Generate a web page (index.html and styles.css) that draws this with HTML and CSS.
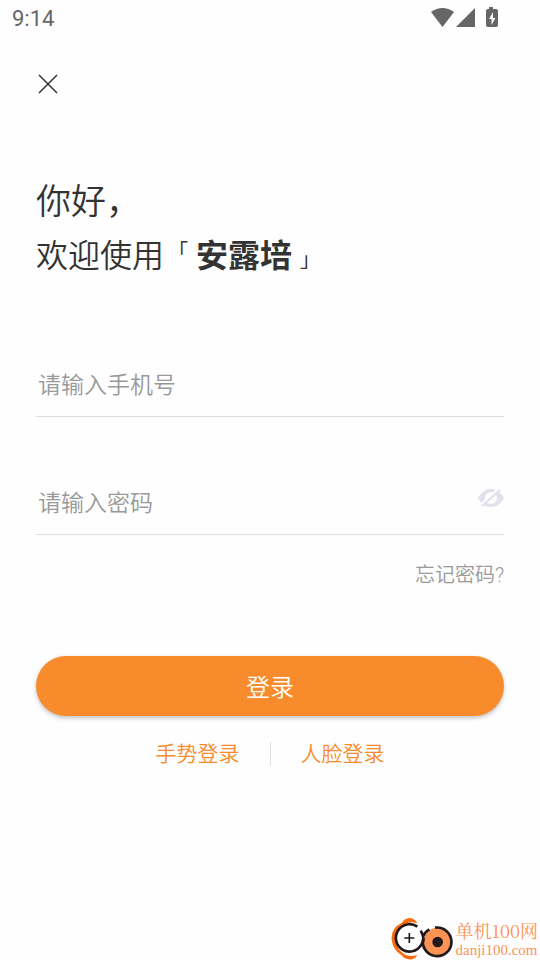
FILE: index.html
```html
<!DOCTYPE html>
<html lang="zh-CN">
<head>
<meta charset="utf-8">
<meta name="viewport" content="width=device-width, initial-scale=1">
<title>登录</title>
<link rel="stylesheet" href="styles.css">
</head>
<body>
<div class="status">
  <span class="time">9:14</span>
  <svg class="signals" viewBox="0 0 68 20" aria-hidden="true">
    <path d="M0 4Q11.500 -4 23 4L11.500 19Z"/>
    <path d="M44 0V19H25Z"/>
    <path fill-rule="evenodd" d="M58 -1h4v2h3q2 0 2 2v14q0 2-2 2h-8q-2 0-2-2v-14q0-2 2-2h1zM62 4l-4 7h2.500V17l4-7H62z"/>
  </svg>
</div>
<main class="page">
  <button class="close" type="button" aria-label="关闭">
    <svg viewBox="0 0 20 20"><path d="M1 1L19 19M19 1L1 19"/></svg>
  </button>
  <h1 class="greeting">
    <span class="hello">你好，</span>
    <span class="welcome">欢迎使用<span class="quote open">「</span><b>安露培</b><span class="quote close-quote">」</span></span>
  </h1>
  <form class="form">
    <div class="field">
      <input type="tel" aria-label="手机号" placeholder="请输入手机号">
    </div>
    <div class="field">
      <input type="password" aria-label="密码" placeholder="请输入密码">
      <button class="eye" type="button" aria-label="显示密码">
        <svg viewBox="0 0 26 18">
          <path class="lid" fill-rule="evenodd" d="M0 9Q5 0 13 0T26 9Q21 18 13 18T0 9ZM13 3a6 6 0 1 0 0 12a6 6 0 1 0 0-12Z"/>
          <path class="gap" d="M3 17L21 0"/>
          <path class="slash" d="M4 17L22 1"/>
        </svg>
      </button>
    </div>
    <a class="forgot" href="#forgot">忘记密码?</a>
    <button class="submit" type="submit">登录</button>
  </form>
  <nav class="alternatives">
    <a href="#gesture">手势登录</a>
    <a href="#face">人脸登录</a>
  </nav>
</main>
<footer class="brand">
  <svg class="brand-logo" viewBox="18 12 192 132" aria-hidden="true">
    <path class="flame" d="M51 32Q58 19 74 18Q91 20 97 34Q78 26 61 36Q35 48 32 77Q30 109 60 128Q77 135 97 129Q88 144 72 142Q56 140 50 130Q24 114 20 83Q17 48 51 32Z"/>
    <circle class="face" cx="73" cy="78" r="41"/>
    <circle class="disc" cx="158" cy="90" r="43"/>
    <path class="ring" d="M97 44A41 41 0 1 0 108 100Q117 88 115 78Q113 66 107 56"/>
    <path class="ring" d="M115 72Q120 59 133 52M150 47A43 43 0 1 1 115 78"/>
    <circle class="hub" cx="158" cy="90" r="16"/>
    <path class="plus" d="M73 63V93M58 78H88"/>
  </svg>
  <div class="brand-text"><span class="brand-name">单机100网</span><span class="brand-site">danji100.com</span></div>
</footer>
</body>
</html>
```
FILE: styles.css
```css
* { box-sizing: border-box; }
body {
  margin: 0;
  min-height: 100vh;
  display: flex;
  flex-direction: column;
  background: #fefefe;
  color: #333;
  font-family: Roboto, "Noto Sans CJK SC", sans-serif;
  font-weight: 350;
}
button { padding: 0; border: 0; background: none; font: inherit; cursor: pointer; }
a { text-decoration: none; }
svg { display: block; }

.status {
  display: flex;
  justify-content: space-between;
  align-items: center;
  height: 36px;
  padding: 0 41px 0 12px;
  color: #666;
}
.time { font-size: 22px; font-weight: 400; }
.signals { width: 68px; height: 20px; fill: #666; overflow: visible; }

.page { padding: 38px 36px 0; }
.close { display: block; width: 24px; height: 20px; }
.close svg { width: 20px; height: 20px; margin: auto; fill: none; stroke: #333; stroke-width: 1.5; }

.greeting { margin: 78px 0 0; font-weight: 350; font-family: "Noto Sans CJK SC", sans-serif; }
.greeting b { font-weight: 700; }
.hello, .welcome { display: block; height: 54px; line-height: 54px; white-space: nowrap; }
.hello { font-size: 35px; }
.welcome { font-size: 32px; }
.quote { font-size: 20px; line-height: 20px; font-weight: 400; font-family: "Noto Sans CJK JP", sans-serif; }
.open { margin: 0 8px 0 4px; vertical-align: 8px; }
.close-quote { margin-left: 8px; vertical-align: baseline; }

.form { display: flex; flex-direction: column; margin-top: 69px; }
.field { display: flex; align-items: center; height: 68px; border-bottom: 1px solid #ddd; }
.field + .field { margin-top: 50px; }
.field input {
  flex: 1;
  min-width: 0;
  padding: 0 2px;
  border: 0;
  outline: 0;
  background: none;
  color: #333;
  font: 350 23px/34px "Noto Sans CJK SC", sans-serif;
}
.field input::placeholder { color: #999; opacity: 1; }
.eye { align-self: flex-start; margin-top: 22px; }
.eye svg { width: 26px; height: 18px; }
.lid { fill: #e1e0ed; }
.gap { fill: none; stroke: #fefefe; stroke-width: 4; }
.slash { fill: none; stroke: #e1e0ed; stroke-width: 2; }
.forgot { align-self: flex-end; margin-top: 25px; color: #999; font-size: 20px; line-height: 30px; }
.submit {
  height: 60px;
  margin-top: 66px;
  padding-bottom: 2px;
  border-radius: 30px;
  background: #f88c2c;
  box-shadow: 0 2px 4px rgba(0, 0, 0, 0.25);
  color: #fff;
  font-size: 24px;
}

.alternatives { display: flex; justify-content: center; align-items: center; margin-top: 26px; }
.alternatives a { padding: 0 30px; color: #f88c2c; font-size: 21px; line-height: 24px; }
.alternatives a + a { border-left: 1px solid #ddd; }

.brand { display: flex; align-items: flex-end; justify-content: flex-end; margin-top: auto; padding-right: 2px; }
.brand-logo { width: 64px; height: 44px; }
.flame { fill: #fa6b0b; }
.face { fill: #fefefe; }
.disc { fill: #fc9354; }
.ring { fill: none; stroke: #211a1b; stroke-width: 8; }
.hub { fill: #211a1b; }
.plus { fill: none; stroke: #211a1b; stroke-width: 5; }
.brand-text { display: flex; flex-direction: column; color: #fc9354; font-weight: 400; }
.brand-name { font-family: "Noto Serif CJK SC", "Noto Sans CJK SC", serif; font-size: 18px; line-height: 20px; }
.brand-site { font-family: "Liberation Serif", serif; font-size: 15px; line-height: 20px; }
```
